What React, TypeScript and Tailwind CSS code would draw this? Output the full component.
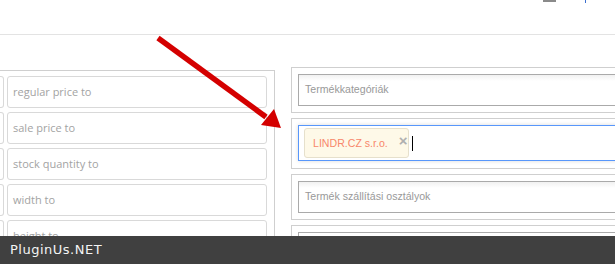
import React from "react";

const leftRows = ["regular price to", "sale price to", "stock quantity to", "width to", "height to"];

function Arrow() {
  return (
    <svg
      className="pointer-events-none absolute left-0 top-0"
      width={615}
      height={264}
      viewBox="0 0 615 264"
    >
      <line x1="158" y1="38" x2="266" y2="117" stroke="#d40000" strokeWidth="5.5" />
      <polygon points="281,128 261,125 274,109" fill="#d40000" />
    </svg>
  );
}

function FilterBox({ children, h }: { children: React.ReactNode; h: string }) {
  return (
    <div className="w-[420px] border border-[#cfcfcf] p-[6px]">
      <div className={`${h} w-full`}>{children}</div>
    </div>
  );
}

export default function App() {
  return (
    <div className="relative h-[264px] w-[615px] overflow-hidden bg-white">
      {/* header strip, mostly scrolled off */}
      <div className="flex h-[35px] justify-end border-b border-[#e3e3e3] pr-[29px]">
        <div className="flex items-start gap-[29px]">
          <span className="block h-[2px] w-[13px] bg-[#8a8a8a]" />
          <span className="block h-[3px] w-[1px] bg-[#3b6fd0]" />
        </div>
      </div>

      <div className="flex items-start">
        {/* left panel */}
        <div className="mt-[35px] flex w-[275px] shrink-0 gap-[3px] border-r border-t border-[#cfcfcf] pr-[7px] pt-[5px]">
          <div className="flex w-[4px] flex-col gap-[4px]">
            {leftRows.map((r) => (
              <div key={r} className="h-[32px] rounded-r-[3px] border border-l-0 border-[#d9d9d9]" />
            ))}
          </div>
          <div className="flex w-[260px] flex-col gap-[4px]">
            {leftRows.map((r) => (
              <div
                key={r}
                className="flex h-[32px] items-center rounded-[3px] border border-[#d9d9d9] px-[5px] text-[11px] text-[#a3a3a3] [font-family:'Open_Sans',sans-serif]"
              >
                {r}
              </div>
            ))}
          </div>
        </div>

        {/* right panel */}
        <div className="ml-[16px] mt-[32px] flex flex-col gap-[5px] [font-family:'Liberation_Sans',Arial,sans-serif]">
          <FilterBox h="h-[32px]">
            <div className="flex h-full items-center border border-[#aaa] bg-gradient-to-b from-[#f1f1f1] to-white to-[20%] px-[6px] text-[10.6px] text-[#999]">
              Termékkategóriák
            </div>
          </FilterBox>
          <div className="w-[420px] border border-[#cfcfcf] px-[6px] pb-[7px] pt-[6px]">
            <div className="flex h-[36px] items-center border border-[#5897fb] pl-[5px] shadow-[0_0_4px_rgba(0,0,0,0.15)]">
              <div className="flex h-[30px] w-[105px] items-center whitespace-nowrap rounded-[3px] border border-[#e6e0cc] bg-[#fef9e8] pl-[8px] text-[10.6px] text-[#f8876a]">
                <span className="mt-[2px]">LINDR.CZ s.r.o.</span>
                <span className="-mt-[6px] ml-[11px] text-[15px] font-bold leading-none text-[#b0b0b0]">×</span>
              </div>
              <span className="ml-[3px] block h-[15px] w-[1px] bg-black" />
            </div>
          </div>
          <FilterBox h="h-[32px]">
            <div className="flex h-full items-center border border-[#aaa] bg-gradient-to-b from-[#f1f1f1] to-white to-[20%] px-[6px] text-[10.6px] text-[#999]">
              Termék szállítási osztályok
            </div>
          </FilterBox>
          <FilterBox h="h-[33px]">
            <div className="h-full border border-[#aaa]" />
          </FilterBox>
        </div>
      </div>

      <Arrow />

      <div className="absolute bottom-0 left-0 flex h-[28px] w-full items-center bg-[#404040] pl-[10px] text-[13px] tracking-[0.5px] text-[#f4f4f4] [font-family:'DejaVu_Sans',sans-serif]">
        PluginUs.NET
      </div>
    </div>
  );
}
